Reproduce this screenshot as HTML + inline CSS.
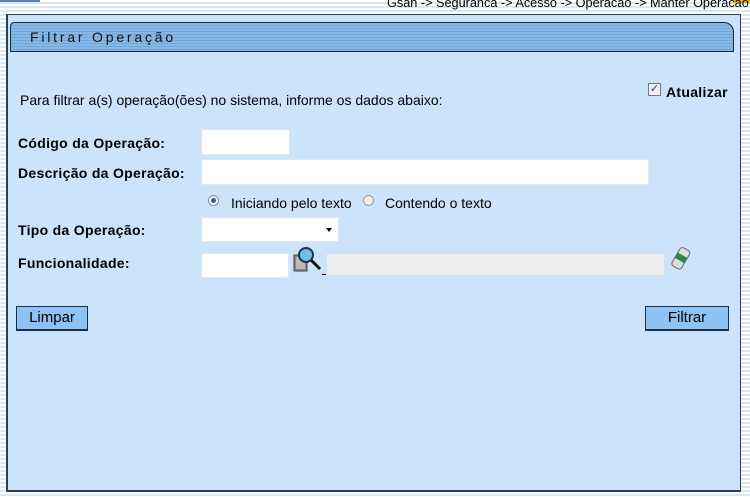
<!DOCTYPE html>
<html><head><style>
body{margin:0;width:750px;height:497px;overflow:hidden;position:relative;font-family:"Liberation Sans",sans-serif;
background:repeating-linear-gradient(to bottom,#fff 0,#fff 2px,#d6e8f7 2px,#d6e8f7 4px);}
.a{position:absolute}
.panel{left:6px;top:14px;width:732px;height:475px;background:#cbe4fb;border:1px solid #2b3e52;border-width:1px 1px 2px 2px}
.title{left:10px;top:22px;width:722px;height:28px;border:1px solid #1b2a3a;border-radius:4px 10px 0 0;
background:repeating-linear-gradient(to bottom,#86b8e6 0,#86b8e6 2px,#74a8dc 2px,#74a8dc 3px);}
.title span{position:absolute;left:19px;top:6px;font-size:14px;letter-spacing:2.8px;color:#111}
.lbl{font-size:14px;font-weight:bold;color:#000;letter-spacing:0.3px}
.t{font-size:14px;color:#000}
.in{background:#fff;border:1px solid #e0e8f0;border-radius:2px}
.btn{background:#8ec2f5;border:1px solid #203040;border-width:1px 1px 2px 1px;font-size:15px;text-align:center;line-height:22px;color:#000}
</style></head><body>
<div class="a" style="left:0;top:0;width:40px;height:2px;background:#5a7fb0"></div>
<div class="a" style="left:733px;top:0;width:17px;height:3px;background:#f0b400"></div>
<div class="a t" style="left:387px;top:-4px;font-size:12.7px;color:#000">Gsan -&gt; Seguranca -&gt; Acesso -&gt; Operacao -&gt; Manter Operacao</div>
<div class="a panel"></div>
<div class="a title"><span>Filtrar Operação</span></div>
<div class="a t" style="left:20px;top:92px">Para filtrar a(s) operação(ões) no sistema, informe os dados abaixo:</div>
<div class="a" style="left:648px;top:83px;width:11px;height:11px;border:1px solid #777;background:#eef;color:#335;font-size:11px;line-height:11px;text-align:center">✓</div>
<div class="a lbl" style="left:666px;top:84px">Atualizar</div>
<div class="a lbl" style="left:18px;top:135px">Código da Operação:</div>
<div class="a in" style="left:201px;top:129px;width:87px;height:24px"></div>
<div class="a lbl" style="left:18px;top:165px">Descrição da Operação:</div>
<div class="a in" style="left:201px;top:159px;width:446px;height:24px"></div>
<div class="a" style="left:208px;top:195px;width:9px;height:9px;border-radius:50%;border:1px solid #889;background:radial-gradient(circle,#1a5fb0 0 2px,#fff 3px)"></div>
<div class="a t" style="left:231px;top:195px">Iniciando pelo texto</div>
<div class="a" style="left:363px;top:195px;width:9px;height:9px;border-radius:50%;border:1px solid #999;background:#eee"></div>
<div class="a t" style="left:385px;top:195px">Contendo o texto</div>
<div class="a lbl" style="left:18px;top:222px">Tipo da Operação:</div>
<div class="a in" style="left:201px;top:217px;width:136px;height:23px"></div>
<div class="a" style="left:326px;top:228px;width:0;height:0;border:3px solid transparent;border-top:4px solid #000"></div>
<div class="a lbl" style="left:18px;top:255px">Funcionalidade:</div>
<div class="a in" style="left:201px;top:253px;width:86px;height:23px"></div>
<svg class="a" style="left:293px;top:246px" width="30" height="30" viewBox="0 0 30 30">
<rect x="1" y="9" width="13" height="16" fill="#888" stroke="#444"/>
<rect x="3" y="11" width="9" height="12" fill="#bbb"/>
<circle cx="13" cy="9" r="7" fill="#6cc0e8" stroke="#234" stroke-width="2"/>
<line x1="18" y1="14" x2="27" y2="23" stroke="#111" stroke-width="3"/></svg>
<div class="a" style="left:322px;top:274px;width:4px;height:1px;background:#000"></div>
<div class="a" style="left:327px;top:254px;width:337px;height:21px;background:#eeeeee"></div>
<svg class="a" style="left:670px;top:246px" width="22" height="26" viewBox="0 0 22 26">
<g transform="rotate(30 11 13)"><rect x="5" y="2" width="11" height="21" rx="3" fill="#ddd" stroke="#666"/><rect x="5" y="9" width="11" height="6" fill="#2a8a4a"/></g></svg>
<div class="a btn" style="left:16px;top:306px;width:70px">Limpar</div>
<div class="a btn" style="left:645px;top:306px;width:82px">Filtrar</div>
</body></html>
